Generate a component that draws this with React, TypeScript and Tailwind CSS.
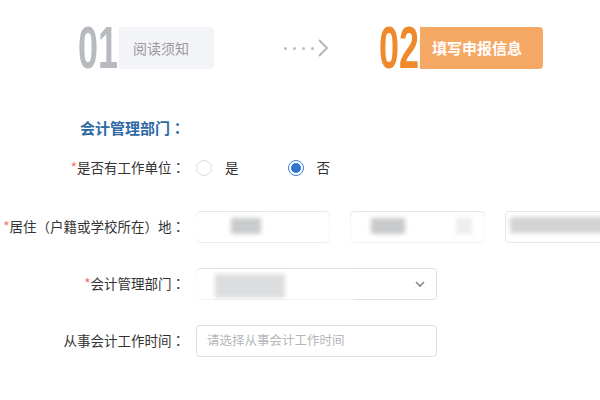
const font = { fontFamily: '"Noto Sans CJK SC", "Liberation Sans", sans-serif' };
const digitFont = { fontFamily: '"Liberation Sans", sans-serif' };

const Colon = () => <span style={{ fontFamily: '"Noto Sans CJK TC", sans-serif' }}>：</span>;

const Label = ({ text, required }: { text: string; required?: boolean }) => (
  <div className="w-[185px] shrink-0 text-right text-[13.5px] text-[#333]">
    {required && <span className="text-[#f56c6c]">*</span>}
    {text}
    <Colon />
  </div>
);

const Blur = ({ className }: { className: string }) => (
  <div className={"absolute blur-[2px] " + className} />
);

const StepNo = ({ n, color }: { n: string; color: string }) => (
  <div className="w-[41px] h-[44px] shrink-0 overflow-visible">
    <div
      className={"text-[60px] leading-[44px] font-bold scale-x-[0.6] origin-left whitespace-nowrap " + color}
      style={digitFont}
    >
      {n}
    </div>
  </div>
);

const App = () => {
  return (
    <div className="w-[600px] h-[400px] bg-white overflow-hidden" style={font}>
      {/* steps */}
      <div className="flex items-center pt-[26px] pl-[78px]">
        <StepNo n="01" color="text-[#b7babf]" />
        <div className="w-[95px] h-[42px] bg-[#f3f4f7] rounded-r flex items-center pl-[14px] text-[14px] text-[#9b9b9b]">
          阅读须知
        </div>
        <div className="ml-[70px] flex items-center gap-[6px]">
          <span className="w-[3px] h-[3px] rounded-full bg-[#bdbdbd]" />
          <span className="w-[3px] h-[3px] rounded-full bg-[#bdbdbd]" />
          <span className="w-[3px] h-[3px] rounded-full bg-[#bdbdbd]" />
          <span className="w-[3px] h-[3px] rounded-full bg-[#bdbdbd]" />
          <svg width="12" height="20" viewBox="0 0 12 20" className="-ml-[3px]">
            <path d="M2 2 L10 10 L2 18" fill="none" stroke="#b5b5b5" strokeWidth="1.8" />
          </svg>
        </div>
        <div className="ml-[50px]">
          <StepNo n="02" color="text-[#f0892b]" />
        </div>
        <div className="w-[123px] h-[42px] bg-[#f6a865] rounded-r-[4px] flex items-center pl-[12px] text-[15px] font-bold text-white">
          填写申报信息
        </div>
      </div>

      {/* section */}
      <div className="pl-[80px] mt-[47px] text-[15px] font-bold text-[#2f6aa5]">
        会计管理部门<Colon />
      </div>

      <div className="flex flex-col mt-[12px]">
        <div className="flex items-center h-[32px]">
          <Label text="是否有工作单位" required />
          <div className="ml-[11px] flex items-center">
            <span className="w-[16px] h-[16px] rounded-full border border-[#dcdfe6] bg-white" />
            <span className="ml-[13px] text-[13.5px] text-[#333]">是</span>
            <span className="ml-[49px] w-[16px] h-[16px] rounded-full border border-[#3b7fd6] bg-white flex items-center justify-center">
              <span className="w-[10px] h-[10px] rounded-full bg-[#2f74cf]" />
            </span>
            <span className="ml-[13px] text-[13.5px] text-[#333]">否</span>
          </div>
        </div>

        <div className="flex items-center h-[32px] mt-[27px]">
          <Label text="居住（户籍或学校所在）地" required />
          <div className="ml-[11px] flex gap-[20px] relative">
            <div className="w-[134px] h-[32px] rounded border border-[#e4e7ed] relative">
              <Blur className="left-[-6px] top-[3px] w-[140px] h-[26px] bg-white/90" />
              <Blur className="left-[34px] top-[6px] w-[30px] h-[16px] bg-[#c9cbcd]" />
            </div>
            <div className="w-[135px] h-[32px] rounded border border-[#e4e7ed] relative">
              <Blur className="left-[-2px] top-[5px] w-[140px] h-[26px] bg-white/80" />
              <Blur className="left-[20px] top-[6px] w-[34px] h-[16px] bg-[#c8cacc]" />
              <Blur className="left-[105px] top-[6px] w-[16px] h-[16px] bg-[#eeeeee]" />
            </div>
            <div className="w-[120px] h-[32px] rounded border border-[#e4e7ed] relative">
              <Blur className="left-[4px] top-[5px] w-[100px] h-[16px] bg-[#d3d4d5]" />
            </div>
          </div>
        </div>

        <div className="flex items-center h-[32px] mt-[25px]">
          <Label text="会计管理部门" required />
          <div className="ml-[11px] w-[241px] h-[32px] rounded border border-[#dcdfe6] relative flex items-center justify-end pr-[10px]">
            <Blur className="left-[-8px] top-[2px] w-[165px] h-[30px] bg-white/90" />
            <Blur className="left-[18px] top-[5px] w-[70px] h-[24px] bg-[#dcdddf]" />
            <svg width="12" height="12" viewBox="0 0 12 12" className="relative">
              <path d="M2 4 L6 8 L10 4" fill="none" stroke="#888" strokeWidth="1.6" />
            </svg>
          </div>
        </div>

        <div className="flex items-center h-[32px] mt-[25px]">
          <Label text="从事会计工作时间" />
          <div className="ml-[11px] w-[241px] h-[32px] rounded border border-[#dcdfe6] flex items-center pl-[10px] text-[12.5px] text-[#b4b6ba]">
            请选择从事会计工作时间
          </div>
        </div>
      </div>
    </div>
  );
};

export default App;
